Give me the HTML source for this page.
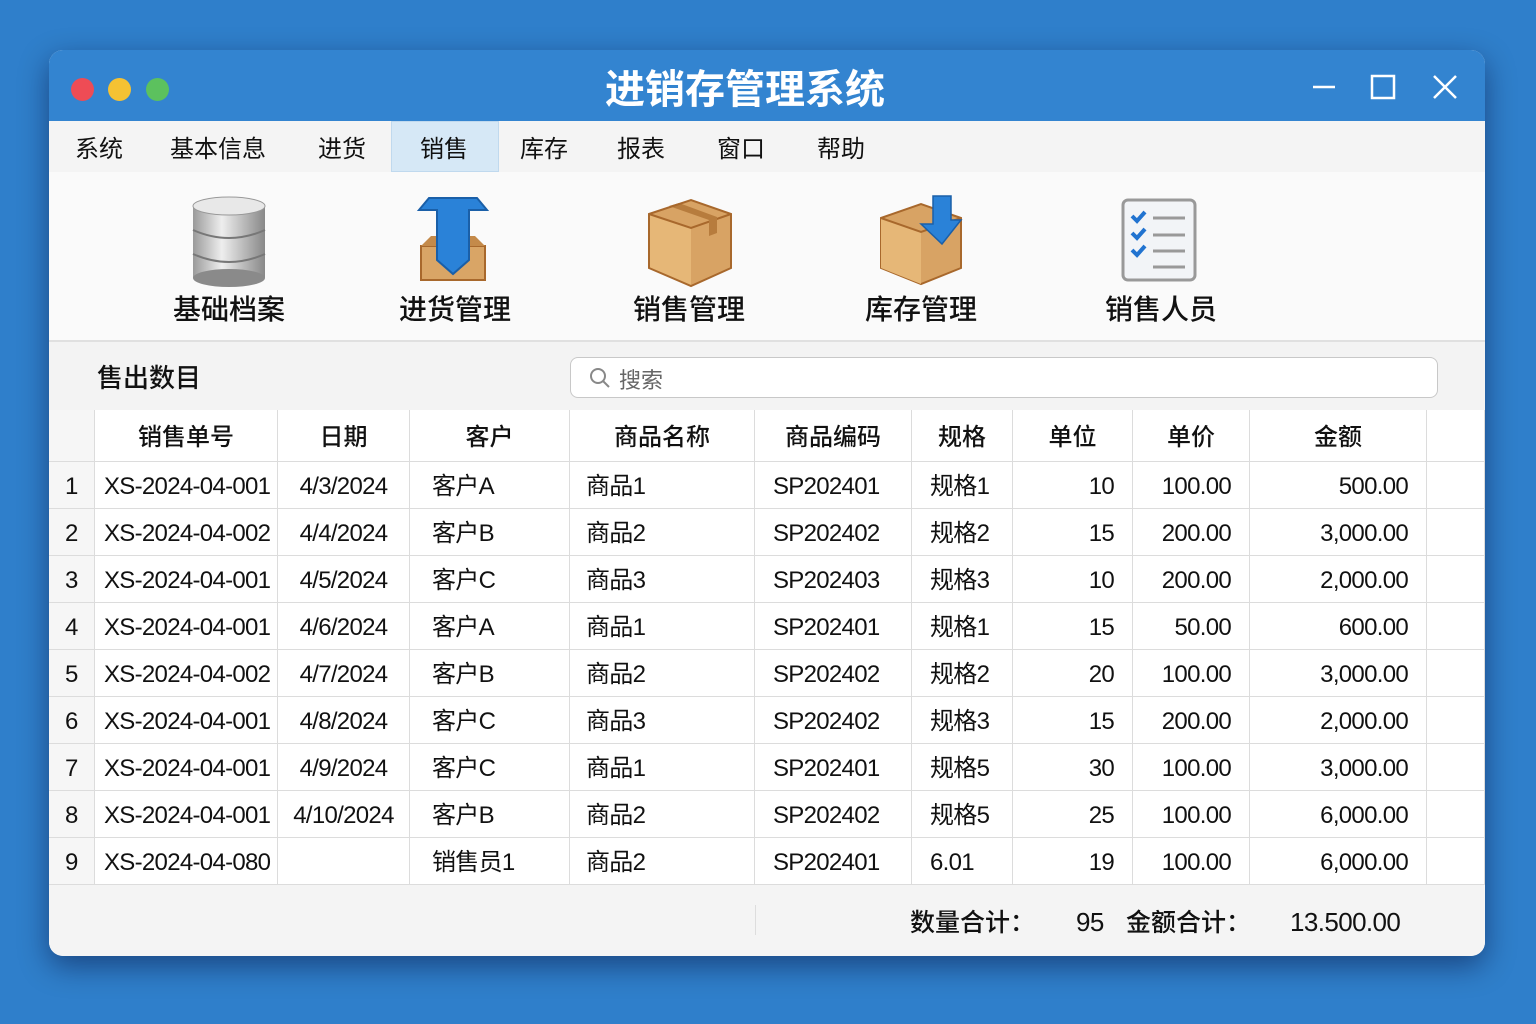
<!DOCTYPE html>
<html><head><meta charset="utf-8"><style>
*{margin:0;padding:0;box-sizing:border-box}
body{width:1536px;height:1024px;background:#2f7fcb;font-family:"Liberation Sans","Noto Sans CJK SC",sans-serif;position:relative;overflow:hidden;color:#111}
.win{position:absolute;left:49px;top:50px;width:1436px;height:906px;background:#f5f5f5;border-radius:14px;overflow:hidden;box-shadow:0 10px 30px rgba(0,0,40,.45)}
.title{position:absolute;left:0;top:0;width:100%;height:71px;background:#3384d0}
.dot{position:absolute;top:28px;width:23px;height:23px;border-radius:50%}
.title h1{position:absolute;left:-22px;width:100%;top:7px;text-align:center;color:#fff;font-size:40px;font-weight:bold;font-family:"Noto Sans CJK SC",sans-serif}
.menu{position:absolute;top:71px;left:0;width:100%;height:51px;background:#f4f4f4}
.menu span{position:absolute;top:8px;font-size:24px;font-family:"Noto Sans CJK SC",sans-serif}
.tb{position:absolute;top:122px;left:0;width:100%;height:170px;background:#fafafa;border-bottom:2px solid #e0e0e0}
.tb .lbl{position:absolute;top:116px;font-size:28px;font-weight:500;font-family:"Noto Sans CJK SC",sans-serif;width:200px;text-align:center}
.sec{position:absolute;top:292px;left:0;width:100%;height:68px;background:#f3f3f3}
.search{position:absolute;left:521px;top:15px;width:868px;height:41px;border:1px solid #c8c8c8;border-radius:8px;background:#fff}
.row{position:absolute;left:0;width:100%;height:47px;border-bottom:1px solid #dcdcdc;background:#fff}
.c{position:absolute;top:0;height:100%;border-right:1px solid #dcdcdc;font-size:24px;line-height:49px;white-space:nowrap;font-family:"Liberation Sans","Noto Sans CJK SC",sans-serif;padding:0 8px;letter-spacing:-0.7px}
.hd .c{font-family:"Noto Sans CJK SC",sans-serif;text-align:center;line-height:50px;letter-spacing:0;font-weight:500}
.r{text-align:right;padding-right:18px}
.foot{position:absolute;top:835px;left:0;width:100%;height:71px;background:#f4f4f4}
.foot span{position:absolute;top:18px;font-size:25px;font-family:"Noto Sans CJK SC",sans-serif}
.foot .n{font-family:"Liberation Sans";top:22px;font-size:26px;letter-spacing:-0.6px}
</style></head><body>
<div class="win">
<div class="title">
<div class="dot" style="left:22px;background:#ee4c55"></div>
<div class="dot" style="left:59px;background:#f5c233"></div>
<div class="dot" style="left:97px;background:#5cc15e"></div>
<h1>进销存管理系统</h1>
<svg style="position:absolute;left:1260px;top:22px" width="160" height="32" viewBox="0 0 160 32"><g stroke="#fff" stroke-width="2.5" fill="none"><path d="M4 15h22"/><rect x="63" y="4" width="22" height="22"/><path d="M125 4l22 22M147 4l-22 22"/></g></svg>
</div>
<div class="menu">
<span style="left:26px">系统</span><span style="left:121px">基本信息</span><span style="left:269px">进货</span>
<div style="position:absolute;left:342px;top:0;width:108px;height:51px;background:#d6e8f6;border:1px solid #c0d9ee"></div>
<span style="left:371px">销售</span><span style="left:471px">库存</span><span style="left:568px">报表</span><span style="left:668px">窗口</span><span style="left:768px">帮助</span>
</div>
<div class="tb">
<svg style="position:absolute;left:142px;top:24px" width="76" height="92" viewBox="0 0 76 92"><defs><linearGradient id="g" x1="0" x2="1"><stop offset="0" stop-color="#9a9a9a"/><stop offset=".4" stop-color="#eee"/><stop offset="1" stop-color="#888"/></linearGradient></defs><rect x="2" y="10" width="72" height="72" fill="url(#g)"/><ellipse cx="38" cy="82" rx="36" ry="9" fill="#8a8a8a"/><ellipse cx="38" cy="10" rx="36" ry="9" fill="#e8e8e8" stroke="#999"/><path d="M2 34q36 16 72 0M2 58q36 16 72 0" stroke="#777" stroke-width="2" fill="none"/></svg>
<svg style="position:absolute;left:366px;top:24px" width="76" height="90" viewBox="0 0 76 90"><path d="M6 50h64v34H6z" fill="#d9a566" stroke="#a8682c" stroke-width="2"/><path d="M6 50l10-10h44l10 10" fill="#c48a4a"/><path d="M4 14L14 2h48l10 12H54v50L38 78 22 64V14z" fill="#2a82d8" stroke="#1a5fa8" stroke-width="2"/></svg>
<svg style="position:absolute;left:596px;top:24px" width="90" height="92" viewBox="0 0 90 92"><path d="M4 18L46 4l40 14v54L46 90 4 72z" fill="#d8a364"/><path d="M4 18l42 14v58L4 72z" fill="#e6b777"/><path d="M4 18l42 14 40-14" stroke="#a8682c" fill="none" stroke-width="2"/><path d="M24 10l40 14v16l8-3V21L34 7z" fill="#b77c3d"/><path d="M4 18L46 4l40 14v54L46 90 4 72z" fill="none" stroke="#a8682c" stroke-width="2"/></svg>
<svg style="position:absolute;left:828px;top:20px" width="90" height="96" viewBox="0 0 90 96"><path d="M4 26L44 12l40 14v50L44 92 4 76z" fill="#d8a364" stroke="#a8682c" stroke-width="2"/><path d="M4 26l40 14v52L4 76z" fill="#e6b777"/><path d="M4 26l40 14 40-14" stroke="#a8682c" fill="none" stroke-width="2"/><path d="M56 4h18v24h10L65 52 44 32h12z" fill="#2a82d8" stroke="#1a5fa8" stroke-width="1.5"/></svg>
<svg style="position:absolute;left:1072px;top:26px" width="78" height="84" viewBox="0 0 78 84"><rect x="2" y="2" width="72" height="80" rx="5" fill="#f2f4f7" stroke="#999" stroke-width="3"/><g stroke="#2173d0" stroke-width="4" fill="none"><path d="M11 18l5 5 8-9M11 35l5 5 8-9M11 52l5 5 8-9"/></g><g stroke="#999" stroke-width="3"><path d="M32 20h32M32 37h32M32 53h32M32 69h32"/></g></svg>
<div class="lbl" style="left:80px">基础档案</div><div class="lbl" style="left:306px">进货管理</div><div class="lbl" style="left:540px">销售管理</div><div class="lbl" style="left:772px">库存管理</div><div class="lbl" style="left:1012px">销售人员</div>
</div>
<div class="sec">
<span style="position:absolute;left:48px;top:16px;font-size:26px;font-weight:500;font-family:'Noto Sans CJK SC',sans-serif">售出数目</span>
<div class="search"><svg style="position:absolute;left:18px;top:9px" width="22" height="22" viewBox="0 0 22 22"><circle cx="9" cy="9" r="7" stroke="#888" stroke-width="2" fill="none"/><path d="M14 14l6 6" stroke="#888" stroke-width="2"/></svg><span style="position:absolute;left:48px;top:5px;font-size:22px;color:#666;font-family:'Noto Sans CJK SC',sans-serif">搜索</span></div>
</div>
<div id="tbl"></div>
<div class="foot">
<div style="position:absolute;left:706px;top:20px;height:30px;border-left:1px solid #ddd"></div>
<span style="left:861px;font-weight:500">数量合计：</span><span class="n" style="left:1027px">95</span><span style="left:1077px;font-weight:500">金额合计：</span><span class="n" style="left:1241px">13.500.00</span>
</div>
</div>
<script>
var cols=[[0,46],[46,183],[229,132],[361,160],[521,185],[706,157],[863,101],[964,120],[1084,117],[1201,177],[1378,58]];
var rows=[["","销售单号","日期","客户","商品名称","商品编码","规格","单位","单价","金额",""]];
var d=[["XS-2024-04-001","4/3/2024","客户A","商品1","SP202401","规格1","10","100.00","500.00"],
["XS-2024-04-002","4/4/2024","客户B","商品2","SP202402","规格2","15","200.00","3,000.00"],
["XS-2024-04-001","4/5/2024","客户C","商品3","SP202403","规格3","10","200.00","2,000.00"],
["XS-2024-04-001","4/6/2024","客户A","商品1","SP202401","规格1","15","50.00","600.00"],
["XS-2024-04-002","4/7/2024","客户B","商品2","SP202402","规格2","20","100.00","3,000.00"],
["XS-2024-04-001","4/8/2024","客户C","商品3","SP202402","规格3","15","200.00","2,000.00"],
["XS-2024-04-001","4/9/2024","客户C","商品1","SP202401","规格5","30","100.00","3,000.00"],
["XS-2024-04-001","4/10/2024","客户B","商品2","SP202402","规格5","25","100.00","6,000.00"],
["XS-2024-04-080","","销售员1","商品2","SP202401","6.01","19","100.00","6,000.00"]];
d.forEach(function(r,i){rows.push([String(i+1)].concat(r).concat([""]));});
var h="";
rows.forEach(function(r,i){
 var top=i==0?360:412+(i-1)*47, ht=i==0?52:47;
 h+='<div class="row'+(i==0?' hd':'')+'" style="top:'+top+'px;height:'+ht+'px">';
 r.forEach(function(t,j){
  var cls="c",st="";
  if(i>0){if(j>=7&&j<=9)cls+=" r";else if(j==0)st="padding-left:16px;";else if(j==2)st="text-align:center;";else st="padding-left:18px;";if(j==1)st="padding-left:9px;";if(j==3)st="padding-left:22px;";if(j==4)st="padding-left:16px;";}
  if(j==0)st+="background:#f6f6f6;";
  h+='<div class="'+cls+'" style="left:'+cols[j][0]+'px;width:'+cols[j][1]+'px;'+st+'">'+t+'</div>';
 });
 h+='</div>';
});
document.getElementById('tbl').innerHTML=h;
</script>
</body></html>
